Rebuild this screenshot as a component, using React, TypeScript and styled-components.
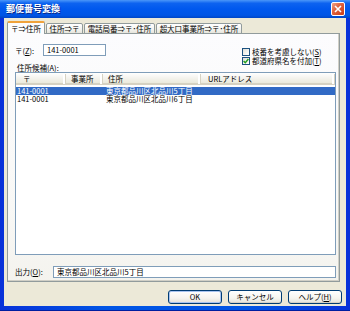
import React from "react";
import styled, { createGlobalStyle } from "styled-components";

const GlobalStyle = createGlobalStyle`
  html, body { margin: 0; padding: 0; background: #0a3fc8; }
  body {
    width: 350px; height: 311px; overflow: hidden;
    font-family: "Noto Sans CJK JP", "Liberation Sans", sans-serif;
  }
  * { box-sizing: border-box; }
`;

const Window = styled.div`
  width: 350px;
  height: 311px;
  display: flex;
  flex-direction: column;
  background: #0055e5;
`;

const TitleBar = styled.div`
  height: 18px;
  flex: none;
  display: flex;
  align-items: center;
  justify-content: space-between;
  padding: 0 5px 0 6px;
  background: linear-gradient(
    to bottom,
    #4b97f9 0%,
    #0d63f0 18%,
    #0058ee 50%,
    #0055e5 85%,
    #0046c6 100%
  );
`;

const Title = styled.span`
  color: #fff;
  font-weight: bold;
  font-size: 9px;
  line-height: 10px;
  text-shadow: 1px 1px 0 #0a2a8a;
`;

const CloseButton = styled.div`
  width: 14px;
  height: 14px;
  border: 1px solid #fff;
  border-radius: 2px;
  background: linear-gradient(135deg, #f0a58a 0%, #e2643e 40%, #c93b17 100%);
  display: flex;
  align-items: center;
  justify-content: center;
`;

const Frame = styled.div`
  flex: 1;
  display: flex;
  padding: 0 4px 4px 4px;
  background: linear-gradient(to right, #0831d9 0%, #0055e5 30%, #0055e5 70%, #0831d9 100%);
  border-bottom: 1px solid #001ea0;
`;

const Client = styled.div`
  flex: 1;
  display: flex;
  flex-direction: column;
  background: #ece9d8;
  padding: 3px 4px 2px 3px;
`;

const TabStrip = styled.div`
  display: flex;
  align-items: flex-end;
  gap: 1px;
  height: 13px;
  position: relative;
  z-index: 1;
  margin-bottom: -1px;
  margin-right: 2px;
`;

const Tab = styled.div<{ $w: number; $active?: boolean }>`
  width: ${(p) => p.$w}px;
  height: ${(p) => (p.$active ? 13 : 11)}px;
  flex: none;
  font-size: 7.5px;
  line-height: 10px;
  color: #000;
  display: flex;
  align-items: center;
  justify-content: center;
  white-space: nowrap;
  border: 1px solid #919b9c;
  border-bottom: ${(p) => (p.$active ? "none" : "1px solid #919b9c")};
  border-radius: 2px 2px 0 0;
  background: ${(p) =>
    p.$active ? "#fcfcfe" : "linear-gradient(to bottom, #ffffff 0%, #f3f3ef 60%, #e6e5dc 100%)"};
  border-top: ${(p) => (p.$active ? "2px solid #f0a23a" : "1px solid #919b9c")};
`;

const Panel = styled.div`
  flex: 1;
  display: flex;
  flex-direction: column;
  border: 1px solid #919b9c;
  margin-right: 2px;
  background: linear-gradient(to bottom, #fcfcfe 0%, #f8f8f6 70%, #f4f3ee 100%);
  box-shadow: inset -1px -1px 0 #d0cfc6;
  padding: 0 3px 3px 7px;
`;

const TopRow = styled.div`
  height: 30px;
  display: flex;
  justify-content: space-between;
  flex: none;
`;

const ZipGroup = styled.div`
  display: flex;
  align-items: center;
  margin-top: 10px;
  height: 12px;
  gap: 0;
`;

const Label = styled.span<{ $w?: number }>`
  font-size: 7.5px;
  line-height: 9px;
  color: #000;
  white-space: nowrap;
  ${(p) => (p.$w ? `width: ${p.$w}px; flex: none;` : "")}
`;

const U = styled.span`
  text-decoration: underline;
`;

const TextBox = styled.div<{ $w?: number }>`
  height: 12px;
  ${(p) => (p.$w ? `width: ${p.$w}px; flex: none;` : "flex: 1;")}
  border: 1px solid #7f9db9;
  background: #fff;
  font-size: 7.5px;
  line-height: 10px;
  padding-left: 3px;
  color: #000;
  white-space: nowrap;
`;

const CheckGroup = styled.div`
  width: 94px;
  display: flex;
  flex-direction: column;
  margin-top: 13px;
`;

const CheckRow = styled.div`
  display: flex;
  align-items: center;
  height: 10px;
  gap: 2px;
`;

const CheckBox = styled.div`
  width: 8px;
  height: 8px;
  flex: none;
  border: 1px solid #1c5180;
  background: linear-gradient(135deg, #dcdcd7 0%, #f4f4f0 60%, #ffffff 100%);
  display: flex;
  align-items: center;
  justify-content: center;
`;

const ListLabel = styled.div`
  height: 8px;
  flex: none;
  font-size: 7.5px;
  line-height: 8px;
  padding-left: 2px;
  color: #000;
`;

const ListView = styled.div`
  flex: 1;
  border: 1px solid #7f9db9;
  background: #fff;
  display: flex;
  flex-direction: column;
`;

const cols = "50px 37px 98px 1fr";

const Header = styled.div`
  display: grid;
  grid-template-columns: ${cols};
  height: 12px;
  flex: none;
  background: linear-gradient(to bottom, #ffffff 0%, #f4f3ee 50%, #ebeadb 100%);
  border-bottom: 2px solid #d6d2c2;
`;

const HeaderCell = styled.div<{ $pad: number }>`
  font-size: 7.5px;
  line-height: 10px;
  padding-left: ${(p) => p.$pad}px;
  border-right: 1px solid #d6d2c2;
  box-shadow: inset -2px 0 0 #fff;
  color: #000;
  white-space: nowrap;
  margin: 1px 0;
`;

const Rows = styled.div`
  display: flex;
  flex-direction: column;
  padding-top: 2px;
`;

const Row = styled.div<{ $selected?: boolean }>`
  display: grid;
  grid-template-columns: ${cols};
  height: 8px;
  background: ${(p) => (p.$selected ? "#316ac5" : "transparent")};
  color: ${(p) => (p.$selected ? "#fff" : "#000")};
`;

const Cell = styled.div<{ $pad: number }>`
  font-size: 7.5px;
  line-height: 8px;
  padding-left: ${(p) => p.$pad}px;
  white-space: nowrap;
  overflow: visible;
`;

const OutputRow = styled.div`
  display: flex;
  align-items: center;
  height: 13px;
  margin-top: 10px;
  flex: none;
`;

const ButtonRow = styled.div`
  display: flex;
  justify-content: flex-end;
  gap: 6px;
  margin-top: 8px;
  height: 14px;
  flex: none;
`;

const Button = styled.div<{ $default?: boolean }>`
  width: 54px;
  height: 14px;
  border: 1px solid #003c74;
  border-radius: 3px;
  background: linear-gradient(to bottom, #ffffff 0%, #f5f4ef 60%, #e3e2da 100%);
  box-shadow: ${(p) =>
    p.$default ? "inset 0 0 0 1px #a8c4f0" : "inset 0 -1px 0 #d6d0c5"};
  font-size: 7.5px;
  line-height: 12px;
  text-align: center;
  color: #000;
`;

export default function App() {
  return (
    <>
      <GlobalStyle />
      <Window>
        <TitleBar>
          <Title>郵便番号変換</Title>
          <CloseButton>
            <svg width="8" height="8" viewBox="0 0 8 8">
              <path d="M1 1 L7 7 M7 1 L1 7" stroke="#fff" strokeWidth="1.6" />
            </svg>
          </CloseButton>
        </TitleBar>
        <Frame>
          <Client>
            <TabStrip>
              <Tab $w={38} $active>〒⇒住所</Tab>
              <Tab $w={37}>住所⇒〒</Tab>
              <Tab $w={71}>電話局番⇒〒･住所</Tab>
              <Tab $w={86}>超大口事業所⇒〒･住所</Tab>
            </TabStrip>
            <Panel>
              <TopRow>
                <ZipGroup>
                  <Label $w={28}>
                    〒(<U>Z</U>):
                  </Label>
                  <TextBox $w={63}>141-0001</TextBox>
                </ZipGroup>
                <CheckGroup>
                  <CheckRow>
                    <CheckBox />
                    <Label>
                      枝番を考慮しない(<U>S</U>)
                    </Label>
                  </CheckRow>
                  <CheckRow>
                    <CheckBox>
                      <svg width="6" height="6" viewBox="0 0 6 6">
                        <path d="M0.6 3 L2.3 4.8 L5.4 1" stroke="#21a121" strokeWidth="1.4" fill="none" />
                      </svg>
                    </CheckBox>
                    <Label>
                      都道府県名を付加(<U>T</U>)
                    </Label>
                  </CheckRow>
                </CheckGroup>
              </TopRow>
              <ListLabel>
                住所候補(<U>A</U>):
              </ListLabel>
              <ListView>
                <Header>
                  <HeaderCell $pad={7}>〒</HeaderCell>
                  <HeaderCell $pad={5}>事業所</HeaderCell>
                  <HeaderCell $pad={5}>住所</HeaderCell>
                  <HeaderCell $pad={7}>URLアドレス</HeaderCell>
                </Header>
                <Rows>
                  <Row $selected>
                    <Cell $pad={1}>141-0001</Cell>
                    <Cell $pad={0}></Cell>
                    <Cell $pad={3}>東京都品川区北品川5丁目</Cell>
                    <Cell $pad={0}></Cell>
                  </Row>
                  <Row>
                    <Cell $pad={1}>141-0001</Cell>
                    <Cell $pad={0}></Cell>
                    <Cell $pad={3}>東京都品川区北品川6丁目</Cell>
                    <Cell $pad={0}></Cell>
                  </Row>
                </Rows>
              </ListView>
              <OutputRow>
                <Label $w={38}>
                  出力(<U>O</U>):
                </Label>
                <TextBox>東京都品川区北品川5丁目</TextBox>
              </OutputRow>
            </Panel>
            <ButtonRow>
              <Button $default>OK</Button>
              <Button>キャンセル</Button>
              <Button>
                ヘルプ(<U>H</U>)
              </Button>
            </ButtonRow>
          </Client>
        </Frame>
      </Window>
    </>
  );
}
